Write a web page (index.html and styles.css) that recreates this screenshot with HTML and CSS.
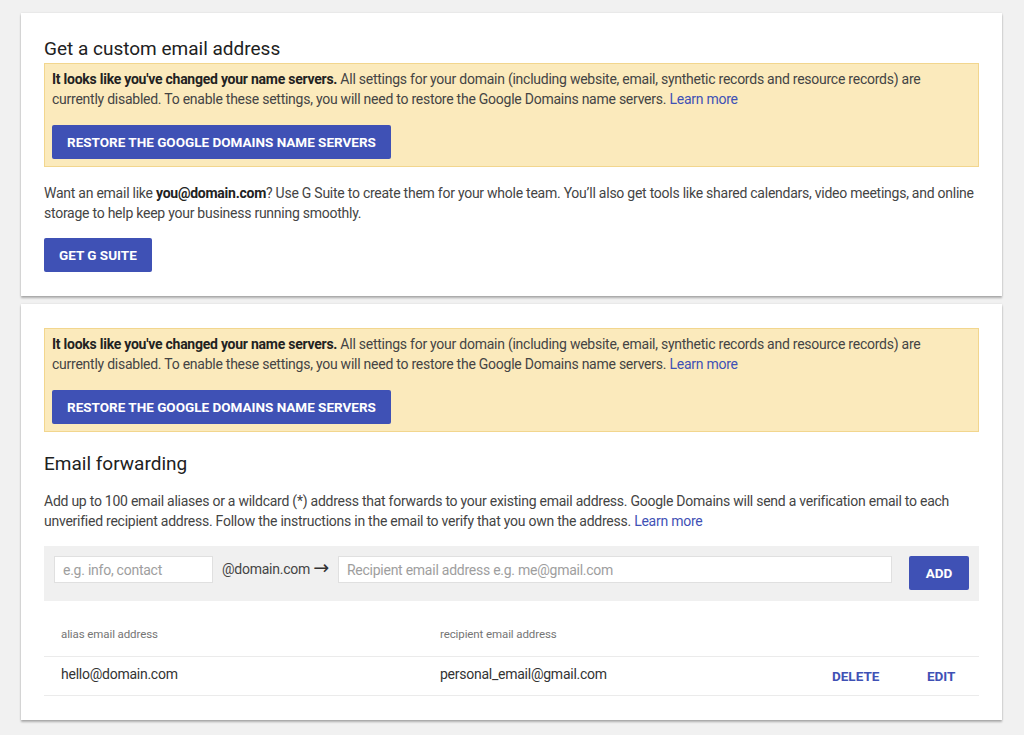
FILE: index.html
```html
<!DOCTYPE html>
<html lang="en">
<head>
    <meta charset="UTF-8">
    <title>Email</title>
    <link rel="stylesheet" href="styles.css">
</head>
<body>
<div class="card">
    <h2 class="title">Get a custom email address</h2>
    <div class="warning">
        <p><b>It looks like you've changed your name servers.</b> All settings for your domain (including website, email, synthetic records and resource records) are currently disabled. To enable these settings, you will need to restore the Google Domains name servers. <a href="javascript:;">Learn more</a></p>
        <a href="javascript:;" class="btn">RESTORE THE GOOGLE DOMAINS NAME SERVERS</a>
    </div>
    <p class="text">Want an email like <b>you@domain.com</b>? Use G Suite to create them for your whole team. You’ll also get tools like shared calendars, video meetings, and online storage to help keep your business running smoothly.</p>
    <a href="javascript:;" class="btn">GET G SUITE</a>
</div>

<div class="card">
    <div class="warning">
        <p><b>It looks like you've changed your name servers.</b> All settings for your domain (including website, email, synthetic records and resource records) are currently disabled. To enable these settings, you will need to restore the Google Domains name servers. <a href="javascript:;">Learn more</a></p>
        <a href="javascript:;" class="btn">RESTORE THE GOOGLE DOMAINS NAME SERVERS</a>
    </div>
    <h2 class="title forward">Email forwarding</h2>
    <p class="text">Add up to 100 email aliases or a wildcard (*) address that forwards to your existing email address. Google Domains will send a verification email to each unverified recipient address. Follow the instructions in the email to verify that you own the address. <a href="javascript:;">Learn more</a></p>
    <div class="form">
        <input class="alias" type="text" placeholder="e.g. info, contact">
        <span class="suffix">@domain.com <span class="arrow">→</span></span>
        <input class="recipient" type="text" placeholder="Recipient email address e.g. me@gmail.com">
        <a href="javascript:;" class="btn add">ADD</a>
    </div>
    <div class="table">
        <div class="head">alias email address</div>
        <div class="head">recipient email address</div>
        <div class="head"></div>
        <div class="head"></div>
        <div class="cell">hello@domain.com</div>
        <div class="cell">personal_email@gmail.com</div>
        <div class="cell action"><a href="javascript:;">DELETE</a></div>
        <div class="cell action"><a href="javascript:;">EDIT</a></div>
    </div>
</div>
</body>
</html>
```

FILE: styles.css
```css
body {
    margin: 0;
    padding: 13px 22px 16px 21px;
    background-color: #f1f1f1;
    font-family: Roboto, "Liberation Sans", sans-serif;
    font-size: 14px;
    letter-spacing: -0.25px;
    color: #444;
}

a {
    text-decoration: none;
    color: #3f51b5;
}

p {
    margin: 0;
    line-height: 20px;
}

b {
    color: #222;
    font-weight: 700;
}

.card {
    background-color: white;
    padding: 24px 23px 24px 23px;
    margin-bottom: 8px;
    box-shadow: 0 2px 2px rgba(0, 0, 0, 0.28), 0 0 2px rgba(0, 0, 0, 0.1);
}

.title {
    margin: 0;
    font-size: 19px;
    font-weight: 400;
    line-height: 24px;
    letter-spacing: 0;
    color: #212121;
}

.title.forward {
    margin-top: 20px;
}

.warning {
    margin-top: 2px;
    padding: 5px 7px 7px;
    background-color: #fbeabc;
    border: 1px solid #f2d68e;
}

.card > .warning:first-child {
    margin-top: 0;
}

.btn {
    display: inline-block;
    height: 34px;
    line-height: 34px;
    padding: 0 15px;
    background-color: #3f51b5;
    color: white;
    font-size: 13.5px;
    font-weight: 700;
    letter-spacing: 0;
    border-radius: 2px;
}

.warning .btn {
    margin-top: 16px;
}

.text {
    margin-top: 16px;
    margin-bottom: 15px;
}

.card .forward + .text {
    margin-top: 15px;
}

.form {
    display: flex;
    align-items: flex-start;
    padding: 10px 10px 11px;
    background-color: #f0f0f0;
}

.form input {
    box-sizing: border-box;
    height: 27px;
    padding: 0 8px;
    border: 1px solid #e0e0e0;
    background-color: white;
    font-family: Roboto, "Liberation Sans", sans-serif;
    font-size: 14px;
    letter-spacing: -0.25px;
    color: #333;
    outline: none;
}

.form input::placeholder {
    color: #9e9e9e;
}

.form .alias {
    width: 159px;
}

.form .suffix {
    line-height: 27px;
    padding: 0 9px;
    color: #444;
    white-space: nowrap;
}

.form .arrow {
    font-family: "DejaVu Sans", sans-serif;
    font-size: 19px;
    line-height: 20px;
    color: #333;
}

.form .recipient {
    flex: 1;
}

.form .add {
    width: 60px;
    margin-left: 17px;
    padding: 0;
    text-align: center;
}

.table {
    display: grid;
    grid-template-columns: 379px 1fr 95px 52px;
}

.head {
    padding: 25px 0 14px 17px;
    line-height: 16px;
    font-size: 11.5px;
    letter-spacing: -0.1px;
    color: #757575;
    border-bottom: 1px solid #ebebeb;
}

.head:nth-child(3), .head:nth-child(4) {
    padding-left: 0;
}

.cell {
    padding: 7px 0 11px 17px;
    line-height: 20px;
    font-size: 14px;
    color: #333;
    border-bottom: 1px solid #ebebeb;
}

.cell.action {
    padding-left: 0;
    padding-top: 9px;
    padding-bottom: 9px;
}

.cell.action a {
    font-size: 13.5px;
    font-weight: 700;
    letter-spacing: 0;
    color: #3f51b5;
}
```
